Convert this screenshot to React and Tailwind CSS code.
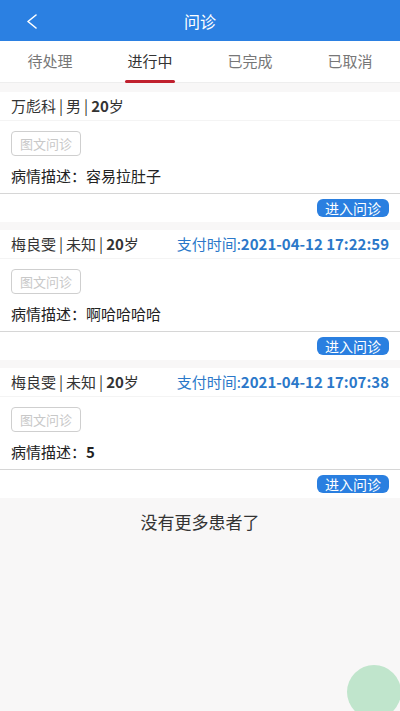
import { useState } from "react"

const TABS = ["待处理", "进行中", "已完成", "已取消"]

const PATIENTS = [
  { name: "万彪科", sex: "男", age: 20, paid: "", desc: "容易拉肚子" },
  { name: "梅良雯", sex: "未知", age: 20, paid: "2021-04-12 17:22:59", desc: "啊哈哈哈哈" },
  { name: "梅良雯", sex: "未知", age: 20, paid: "2021-04-12 17:07:38", desc: "5" },
]

function PatientCard({ p }) {
  return (
    <div className="bg-white">
      <div className="h-[29px] px-[11px] flex items-center justify-between border-b border-[#f4f4f4] text-[15px] text-[#333]">
        <span>
          {p.name}<span className="mx-[3px]">|</span>{p.sex}<span className="mx-[3px]">|</span><b className="font-bold">{p.age}</b>岁
        </span>
        {p.paid && (
          <span className="text-[#2b78c9] text-[15px]">
            支付时间:<b className="font-bold">{p.paid}</b>
          </span>
        )}
      </div>
      <div className="px-[11px] pt-[10px] pb-[5px] border-b border-[#d6d6d6]">
        <div className="w-[70px] h-[25px] border border-[#cfcfcf] rounded-[4px] flex items-center justify-center text-[13px] text-[#c8c8c8]">
          图文问诊
        </div>
        <div className="mt-[8px] leading-[24px] text-[15px] text-[#222]">
          病情描述：<span className={/^\d+$/.test(p.desc) ? "font-bold" : ""}>{p.desc}</span>
        </div>
      </div>
      <div className="h-[28px] px-[11px] flex items-center justify-end">
        <button className="h-[18px] w-[72px] rounded-[6px] bg-[#2a7fe0] text-white text-[14px] leading-[18px]">
          进入问诊
        </button>
      </div>
    </div>
  )
}

export default function App() {
  const [tab, setTab] = useState(1)

  return (
    <div className="relative w-[400px] h-[711px] overflow-hidden bg-[#f8f7f7]" style={{ fontFamily: '"Noto Sans CJK SC", "Noto Sans", sans-serif' }}>
      <div className="h-[41px] bg-[#2b80e2] relative flex items-center justify-center">
        <svg className="absolute left-[26px] top-[14px]" width="12" height="15" viewBox="0 0 12 15" fill="none">
          <path d="M10 1 L2 7.5 L10 14" stroke="white" strokeWidth="1.6" strokeLinecap="round" strokeLinejoin="round" />
        </svg>
        <span className="text-white text-[16px]">问诊</span>
      </div>

      <div className="h-[42px] bg-white flex border-b border-[#eeeeee]">
        {TABS.map((t, i) => (
          <button key={t} onClick={() => setTab(i)} className="flex-1 relative flex items-center justify-center">
            <span className={`text-[15px] ${tab === i ? "text-[#333]" : "text-[#777]"}`}>{t}</span>
            {tab === i && <span className="absolute bottom-[-1px] left-1/2 -translate-x-1/2 w-[50px] h-[3px] rounded-full bg-[#c0202e]" />}
          </button>
        ))}
      </div>

      <div className="pt-[9px] flex flex-col gap-[8px]">
        {PATIENTS.map((p, i) => <PatientCard key={i} p={p} />)}
      </div>

      <div className="pt-[11px] text-center text-[17px] text-[#333]">没有更多患者了</div>

      <div className="absolute left-[347px] top-[665px] w-[54px] h-[54px] rounded-full bg-[#c0e5cc]" />
    </div>
  )
}
